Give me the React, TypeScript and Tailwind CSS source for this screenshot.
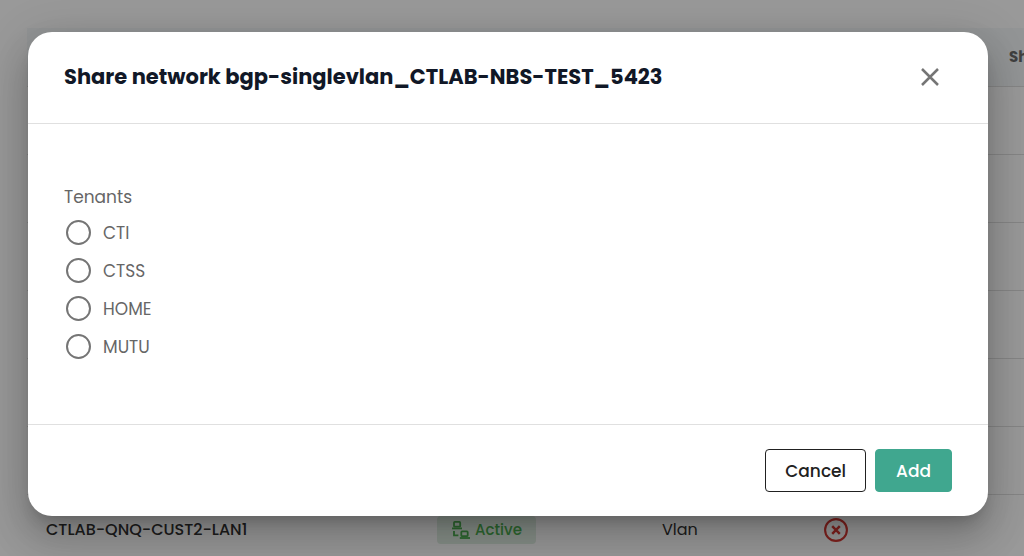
import React from "react";

const TENANTS = ["CTI", "CTSS", "HOME", "MUTU"];
const EMPTY_ROWS = [1, 2, 3, 4, 5, 6];

function DevicesIcon() {
  return (
    <svg viewBox="0 0 18 18" className="size-[18px]" fill="none" stroke="currentColor" strokeWidth="1.8" aria-hidden="true">
      <rect x="2" y="0.9" width="6.2" height="4.8" rx="0.8" />
      <path d="M0 7.4h10" />
      <path d="M2 10v4.4h4.4" />
      <rect x="9.3" y="10.4" width="6.4" height="4.8" rx="0.8" />
      <path d="M7.8 17h10.2" />
    </svg>
  );
}

function NotSharedIcon() {
  return (
    <svg viewBox="0 0 24 24" className="size-6" fill="none" stroke="currentColor" role="img" aria-label="Not shared">
      <circle cx="12" cy="12" r="10.9" strokeWidth="2.1" />
      <path d="M8.2 8.2l7.6 7.6M15.8 8.2l-7.6 7.6" strokeWidth="2.5" />
    </svg>
  );
}

function NetworksTable() {
  return (
    <div className="absolute inset-0 overflow-hidden bg-white pt-7 pl-[27px]">
      <table className="w-full min-w-[1120px] table-fixed border-collapse text-left text-base text-[#333333]">
        <colgroup>
          <col className="w-[410px]" />
          <col className="w-[210px]" />
          <col className="w-[150px]" />
          <col className="w-[212px]" />
          <col />
        </colgroup>
        <thead>
          <tr className="h-[58px] border-b border-[#e0e0e0] bg-[#f6f9fb]">
            <th />
            <th />
            <th />
            <th />
            <th className="text-[15px] font-bold text-[#6b6b6b]">Sh</th>
          </tr>
        </thead>
        <tbody>
          {EMPTY_ROWS.map((row) => (
            <tr key={row} className="h-[68px] border-b border-[#e0e0e0]">
              <td colSpan={5} />
            </tr>
          ))}
          <tr className="h-[72px]">
            <td className="pl-[19px] font-medium">CTLAB-QNQ-CUST2-LAN1</td>
            <td>
              <span className="flex h-7 w-fit items-center gap-[5px] rounded bg-[#e2f0e4] pr-[14px] pl-[15px] text-[15px] font-medium text-[#4caf50]">
                <DevicesIcon />
                Active
              </span>
            </td>
            <td className="pl-[15px]">Vlan</td>
            <td className="pl-[27px] text-[#d83a34]">
              <NotSharedIcon />
            </td>
            <td />
          </tr>
        </tbody>
      </table>
    </div>
  );
}

function ShareDialog() {
  return (
    <form
      role="dialog"
      aria-modal="true"
      aria-labelledby="share-title"
      onSubmit={(event) => event.preventDefault()}
      className="w-full max-w-[960px] rounded-[24px] bg-white shadow-[0_11px_15px_-7px_rgba(0,0,0,0.2),0_24px_38px_3px_rgba(0,0,0,0.14),0_9px_46px_8px_rgba(0,0,0,0.12)]"
    >
      <header className="flex items-center justify-between border-b border-[#e0e0e0] pt-6 pr-[38px] pb-[26px] pl-9">
        <h2 id="share-title" className="text-[21px] leading-[41px] font-bold text-[#111827]">
          Share network bgp-singlevlan_CTLAB-NBS-TEST_5423
        </h2>
        <button type="button" aria-label="Close" className="flex size-10 items-center justify-center text-[#757575]">
          <svg viewBox="0 0 18 18" className="size-[18px]" fill="none" stroke="currentColor" strokeWidth="2.5" aria-hidden="true">
            <path d="M1 1l16 16M17 1L1 17" />
          </svg>
        </button>
      </header>
      <div className="px-9 pt-[61px] pb-[59px]">
        <fieldset className="text-[17px] leading-6 text-[#666666]">
          <legend className="h-7">Tenants</legend>
          {TENANTS.map((tenant) => (
            <label key={tenant} className="flex h-[38px] items-center gap-3 pl-[2px]">
              <input
                type="radio"
                name="tenant"
                value={tenant}
                className="size-[25px] appearance-none rounded-full border-2 border-[#757575] checked:border-[7px] checked:border-[#40a78f]"
              />
              <span className="pt-[2px]">{tenant}</span>
            </label>
          ))}
        </fieldset>
      </div>
      <footer className="flex justify-end gap-[9px] border-t border-[#e0e0e0] px-9 py-6 text-[17px] leading-[39px] font-medium">
        <button type="button" className="rounded border border-[#212121] px-[19px] pt-[2px] text-[#212121]">
          Cancel
        </button>
        <button type="submit" className="rounded border border-[#40a78f] bg-[#40a78f] px-5 pt-[2px] text-white">
          Add
        </button>
      </footer>
    </form>
  );
}

export default function App() {
  return (
    <main className="relative min-h-screen overflow-hidden font-[Poppins,Inter,sans-serif]">
      <NetworksTable />
      <div className="relative flex min-h-screen items-start justify-center bg-black/40 pt-8 pr-9 pb-10 pl-7">
        <ShareDialog />
      </div>
    </main>
  );
}
